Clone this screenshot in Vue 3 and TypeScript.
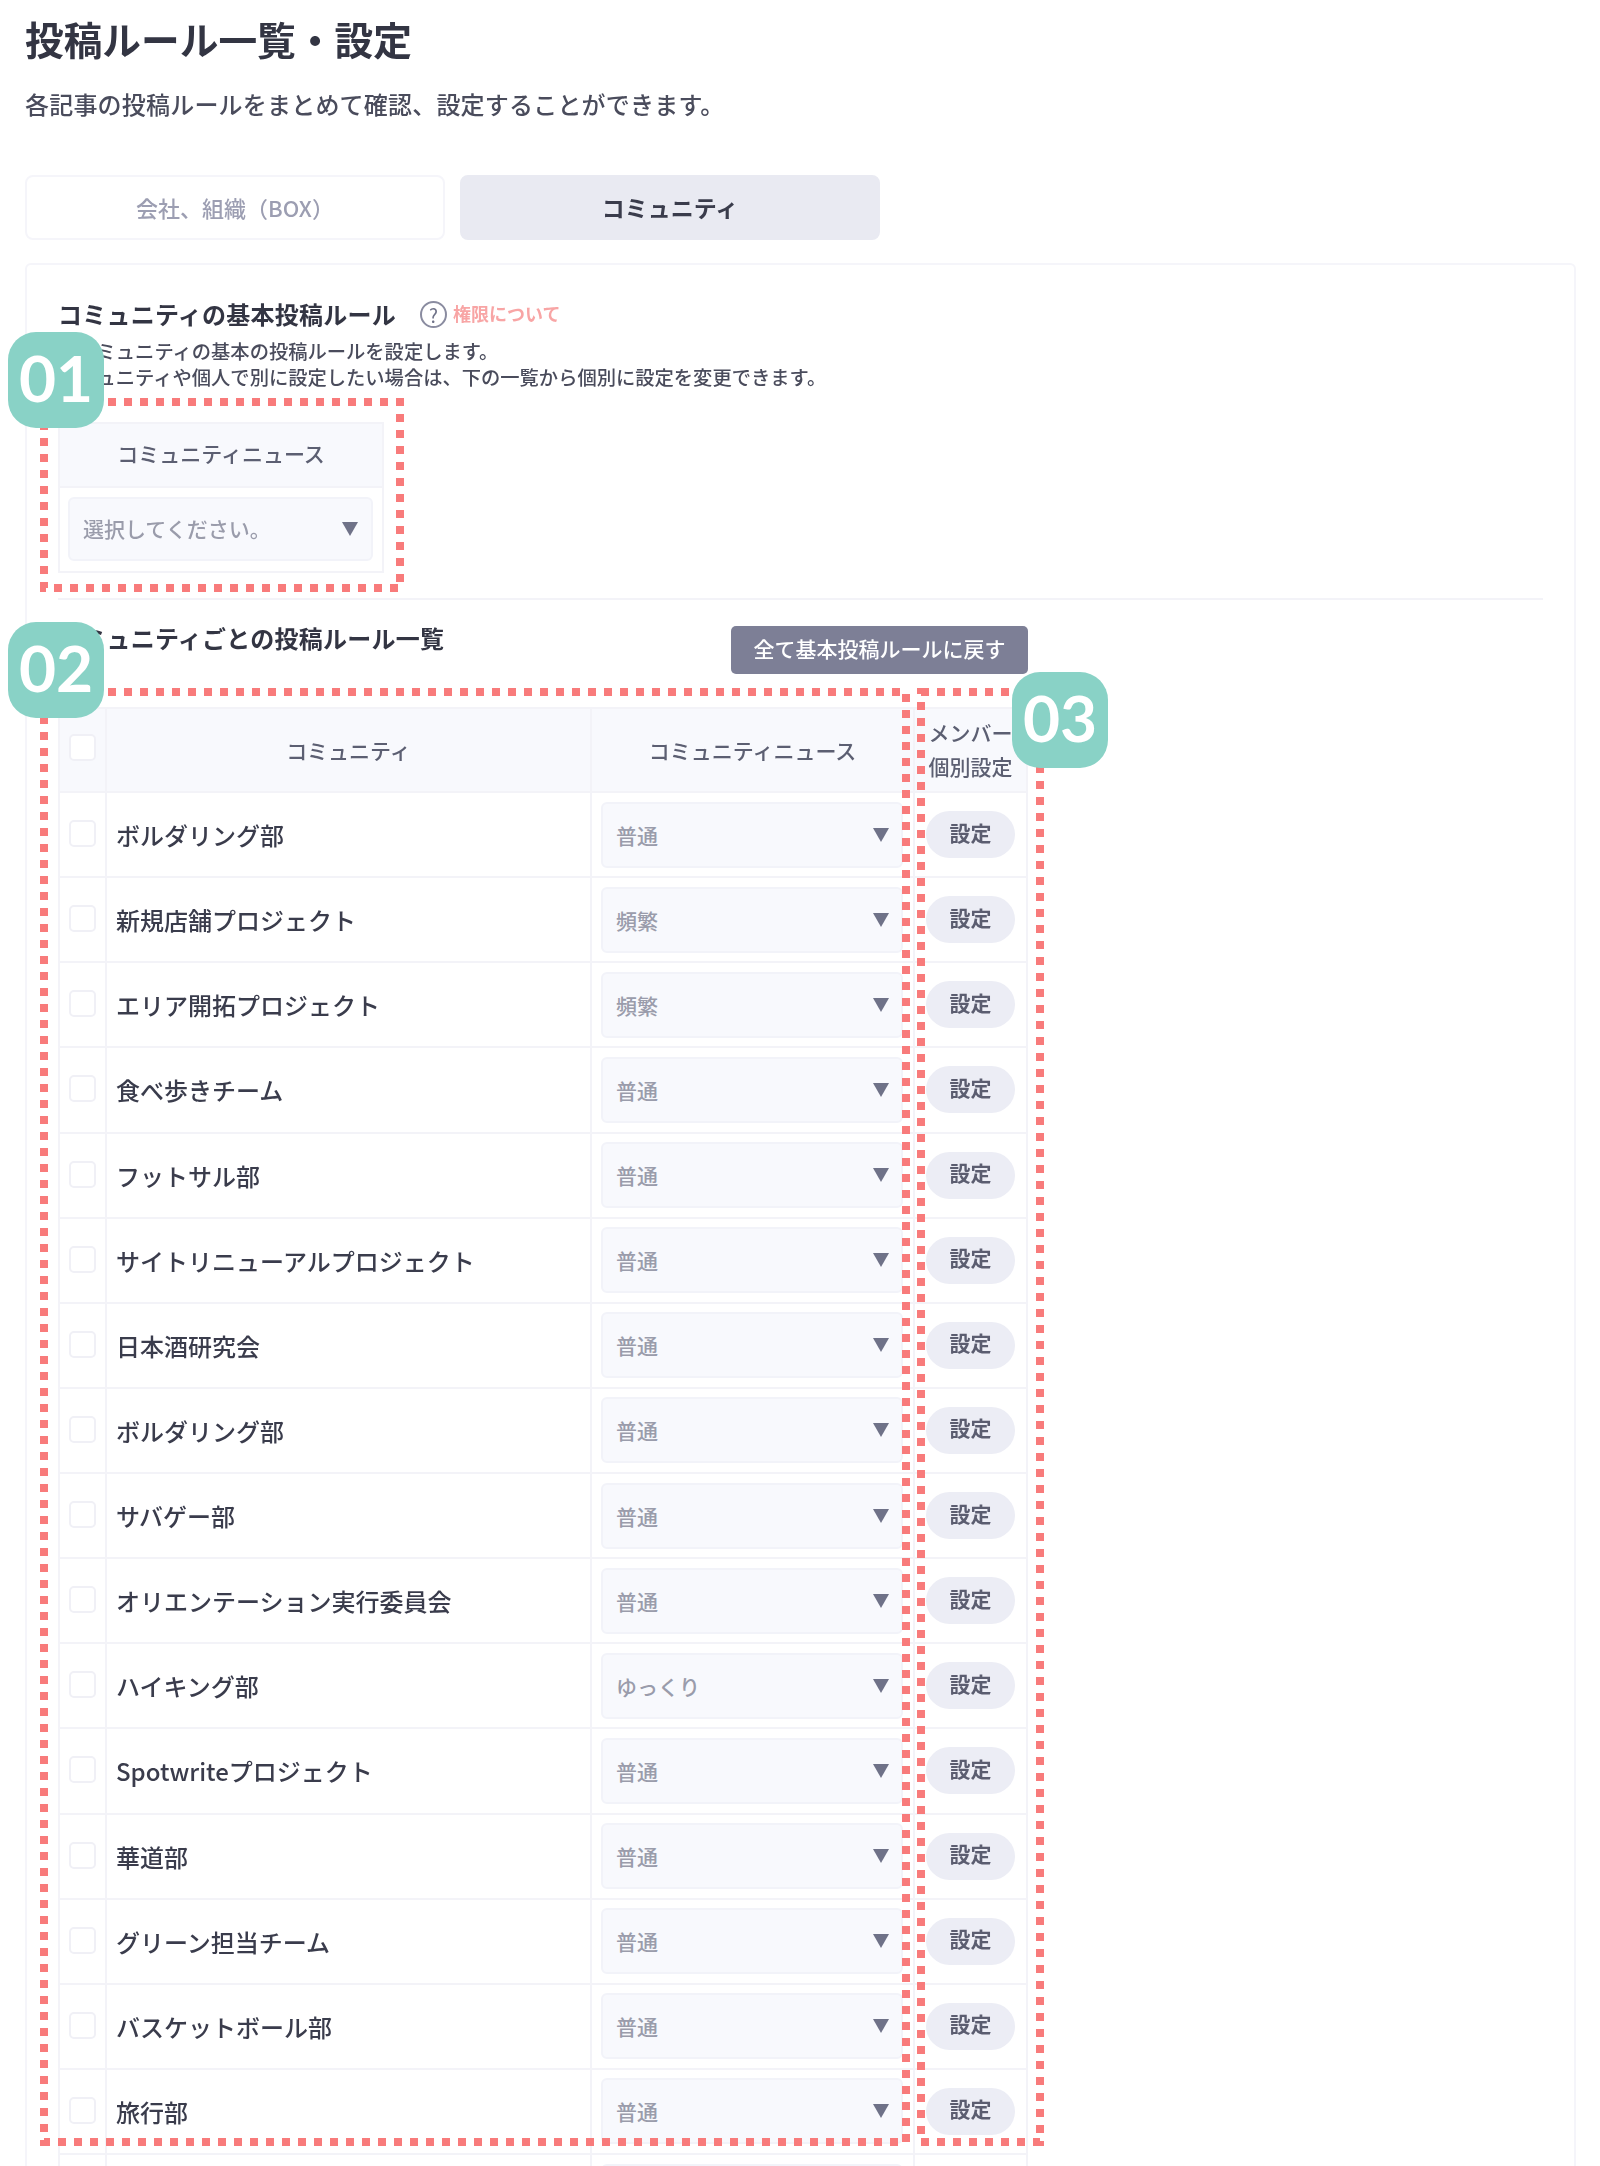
<script setup lang="ts">
interface Community {
  name: string
  freq: string
}

const communities: Community[] = [
  { name: 'ボルダリング部', freq: '普通' },
  { name: '新規店舗プロジェクト', freq: '頻繁' },
  { name: 'エリア開拓プロジェクト', freq: '頻繁' },
  { name: '食べ歩きチーム', freq: '普通' },
  { name: 'フットサル部', freq: '普通' },
  { name: 'サイトリニューアルプロジェクト', freq: '普通' },
  { name: '日本酒研究会', freq: '普通' },
  { name: 'ボルダリング部', freq: '普通' },
  { name: 'サバゲー部', freq: '普通' },
  { name: 'オリエンテーション実行委員会', freq: '普通' },
  { name: 'ハイキング部', freq: 'ゆっくり' },
  { name: 'Spotwriteプロジェクト', freq: '普通' },
  { name: '華道部', freq: '普通' },
  { name: 'グリーン担当チーム', freq: '普通' },
  { name: 'バスケットボール部', freq: '普通' },
  { name: '旅行部', freq: '普通' },
  { name: '', freq: '普通' },
]
</script>

<template>
  <div class="page">
    <div class="sheet">
      <h1 class="title">投稿ルール一覧・設定</h1>
      <p class="lead">各記事の投稿ルールをまとめて確認、設定することができます。</p>

      <nav class="tabs">
        <button class="tab">会社、組織（BOX）</button>
        <button class="tab active">コミュニティ</button>
      </nav>

      <section class="panel">
        <div class="heading-row">
          <h2 class="heading">コミュニティの基本投稿ルール</h2>
          <span class="help">?</span>
          <a class="help-link">権限について</a>
        </div>
        <p class="desc">
          全コミュニティの基本の投稿ルールを設定します。<br />
          コミュニティや個人で別に設定したい場合は、下の一覧から個別に設定を変更できます。
        </p>

        <div class="base-rule">
          <div class="base-head">コミュニティニュース</div>
          <div class="base-body">
            <div class="select">
              <span>選択してください。</span>
              <svg class="arrow" viewBox="0 0 16 14"><path d="M0 0h16L8 14z" /></svg>
            </div>
          </div>
        </div>

        <hr class="divider" />

        <div class="list-head">
          <h2 class="heading">コミュニティごとの投稿ルール一覧</h2>
          <button class="reset">全て基本投稿ルールに戻す</button>
        </div>

        <div class="table">
          <div class="row head">
            <div class="cell"><span class="check"></span></div>
            <div class="cell center">コミュニティ</div>
            <div class="cell center">コミュニティニュース</div>
            <div class="cell center member">メンバー<br />個別設定</div>
          </div>
          <div v-for="(c, i) in communities" :key="i" class="row">
            <div class="cell"><span class="check"></span></div>
            <div class="cell name">{{ c.name }}</div>
            <div class="cell pick">
              <div class="select">
                <span>{{ c.freq }}</span>
                <svg class="arrow" viewBox="0 0 16 14"><path d="M0 0h16L8 14z" /></svg>
              </div>
            </div>
            <div class="cell center"><button class="set">設定</button></div>
          </div>
        </div>
      </section>
    </div>

    <!-- annotation overlay -->
    <svg class="marks" width="1600" height="2166" viewBox="0 0 1600 2166">
      <rect x="44" y="402" width="356" height="186" />
      <rect x="44" y="692" width="862" height="1450" />
      <rect x="921" y="692" width="119" height="1450" />
    </svg>
    <div class="badge b1">01</div>
    <div class="badge b2">02</div>
    <div class="badge b3">03</div>
  </div>
</template>

<style scoped>
.page {
  position: relative;
  height: 2166px;
  overflow: hidden;
  background: #fff;
  color: #3a3c4c;
  font-family: "Noto Sans CJK JP", "Noto Sans", sans-serif;
}

/* the reference is a soft, upscaled capture */
.sheet {
  padding: 18px 24px 0 25px;
  filter: blur(0.6px);
}

.title {
  margin: 0;
  font-size: 38.7px;
  line-height: 40px;
  font-weight: 700;
  color: #333543;
}

.lead {
  margin: 30px 0 0;
  font-size: 24px;
  line-height: 32px;
  letter-spacing: 0.2px;
  font-weight: 500;
  color: #4a4c5c;
}

.tabs {
  display: flex;
  gap: 15px;
  margin-top: 55px;
}

.tab {
  width: 420px;
  height: 65px;
  padding: 0 0 1px;
  border: 2px solid #f5f5fa;
  border-radius: 8px;
  background: #fff;
  color: #9c9eb2;
  font: inherit;
  font-size: 22px;
  font-weight: 500;
}

.tab.active {
  border-color: #e9eaf2;
  background: #e9eaf2;
  color: #3a3c4c;
  font-size: 23px;
  font-weight: 700;
}

.panel {
  margin-top: 23px;
  height: 2000px;
  padding: 32px 31px 0;
  border: 2px solid #f5f5fa;
  border-radius: 6px;
}

.heading-row {
  display: flex;
  align-items: center;
  height: 34px;
}

.heading {
  margin: 0;
  font-size: 24px;
  line-height: 34px;
  letter-spacing: 0.25px;
  font-weight: 700;
  color: #333543;
}

.help {
  display: flex;
  align-items: center;
  justify-content: center;
  box-sizing: border-box;
  width: 27px;
  height: 27px;
  margin-left: 24px;
  border: 2px solid #8a8ca0;
  border-radius: 50%;
  font-size: 19px;
  color: #6f7288;
}

.help-link {
  margin-left: 6px;
  padding-bottom: 2px;
  font-size: 18px;
  font-weight: 700;
  color: #f8a5a5;
}

.desc {
  margin: 7px 0 0;
  font-size: 19.3px;
  line-height: 26px;
  font-weight: 500;
  color: #4a4c5c;
}

.base-rule {
  width: 326px;
  height: 151px;
  margin-top: 32px;
  box-sizing: border-box;
  border: 2px solid #f3f3f8;
}

.base-head {
  display: flex;
  align-items: center;
  justify-content: center;
  height: 64px;
  padding-bottom: 5px;
  box-sizing: border-box;
  border-bottom: 2px solid #f3f3f8;
  background: #f8f9fd;
  font-size: 21px;
  font-weight: 500;
  color: #5c5f72;
}

.base-body {
  padding: 9px 9px 0 8px;
}

.base-body .select {
  height: 64px;
  padding: 0 0 2px 13px;
}

.base-body .arrow {
  right: 13px;
}

.divider {
  height: 2px;
  margin: 25px 0 0;
  border: 0;
  background: #f3f3f8;
}

.list-head {
  display: flex;
  align-items: flex-start;
  justify-content: space-between;
  width: 970px;
  margin-top: 21px;
}

.reset {
  width: 297px;
  height: 48px;
  margin-top: 5px;
  padding: 0 0 4px;
  border: 0;
  border-radius: 5px;
  background: #7d7f96;
  color: #fff;
  font: inherit;
  font-size: 21px;
  font-weight: 500;
}

.table {
  width: 970px;
  margin-top: 33px;
  box-sizing: border-box;
  border: solid #f3f3f8;
  border-width: 2px 2px 0;
}

.row {
  display: grid;
  grid-template-columns: 47px 485px 323px 111px;
  height: 85.125px;
  box-sizing: border-box;
  border-bottom: 2px solid #f3f3f8;
}

.row.head {
  height: 84px;
  background: #f8f9fd;
  font-size: 21px;
  font-weight: 500;
  color: #5c5f72;
}

.cell {
  display: flex;
  align-items: center;
  box-sizing: border-box;
  border-right: 2px solid #f3f3f8;
}

.cell:first-child {
  justify-content: center;
}

.cell:last-child {
  border-right: 0;
}

.center {
  justify-content: center;
  text-align: center;
}

.member {
  padding-bottom: 2px;
  line-height: 34px;
}

.name {
  padding-left: 9px;
  font-size: 24px;
  font-weight: 500;
  color: #3a3c4c;
}

.pick {
  padding: 0 10px 0 9px;
}

.check {
  width: 27px;
  height: 27px;
  margin-top: -2px;
  box-sizing: border-box;
  border: 2px solid #f0f0f6;
  border-radius: 5px;
  background: #fff;
}

.head .check {
  margin-top: -5px;
}

.select {
  position: relative;
  display: flex;
  align-items: center;
  flex: 1;
  height: 66px;
  padding: 0 0 0 13px;
  box-sizing: border-box;
  border: 2px solid #f2f3f9;
  border-radius: 6px;
  background: #f8f9fd;
  font-size: 21px;
  font-weight: 500;
  color: #9a9cab;
}

.arrow {
  position: absolute;
  top: 50%;
  right: 12px;
  width: 16px;
  height: 14px;
  margin-top: -7px;
  fill: #6f7288;
}

.set {
  width: 89px;
  height: 47px;
  padding: 0 0 6px;
  border: 0;
  border-radius: 24px;
  background: #ecedf5;
  color: #5b5d70;
  font: inherit;
  font-size: 21px;
  font-weight: 700;
}

.marks {
  position: absolute;
  top: 0;
  left: 0;
  fill: none;
  stroke: #f87b7b;
  stroke-width: 8;
  stroke-dasharray: 8 8;
}

.badge {
  position: absolute;
  display: flex;
  align-items: center;
  justify-content: center;
  width: 96px;
  height: 96px;
  padding-bottom: 5px;
  box-sizing: border-box;
  border-radius: 28px;
  background: #89d2c6;
  color: #fff;
  font-family: Lato, sans-serif;
  font-size: 64px;
  font-weight: 700;
}

.b1 {
  top: 332px;
  left: 8px;
}

.b2 {
  top: 622px;
  left: 8px;
}

.b3 {
  top: 672px;
  left: 1012px;
}
</style>
